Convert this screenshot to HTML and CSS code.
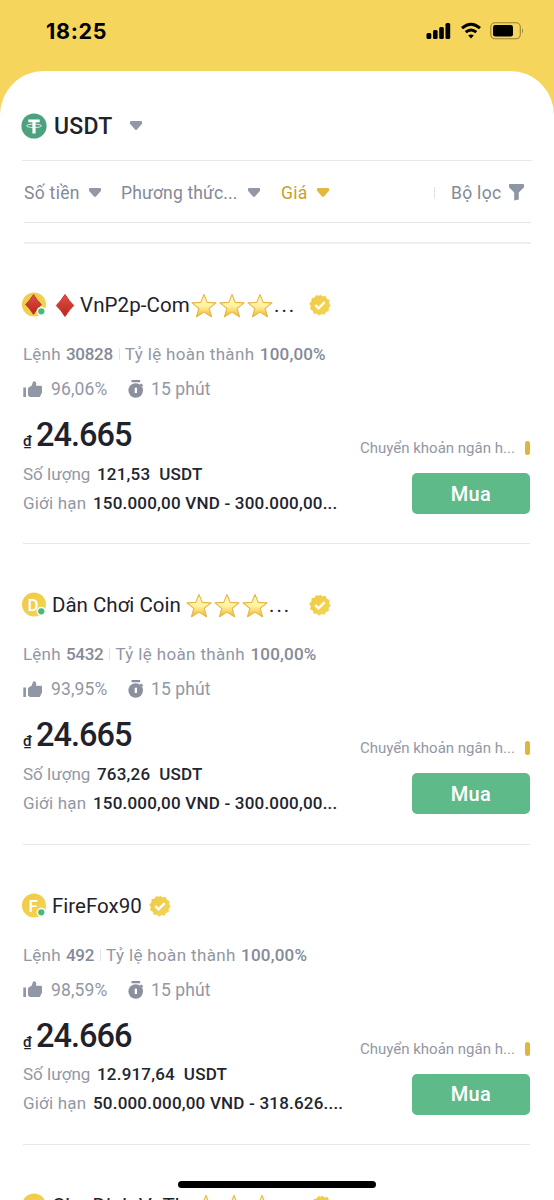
FILE: index.html
```html
<!DOCTYPE html>
<html lang="vi">
<head>
<meta charset="utf-8">
<title>P2P USDT</title>
<link rel="stylesheet" href="styles.css">
</head>
<body>
<svg class="defs" width="0" height="0" aria-hidden="true">
  <defs>
    <linearGradient id="gold" x1="0" y1="0" x2="1" y2="1"><stop offset="0" stop-color="#efc944"/><stop offset="1" stop-color="#f3d655"/></linearGradient>
    <linearGradient id="starfill" x1="0" y1="0" x2="0" y2="1"><stop offset="0" stop-color="#fff8bd"/><stop offset=".52" stop-color="#fff3a0"/><stop offset="1" stop-color="#f3b52d"/></linearGradient>
    <linearGradient id="ruby" x1="0" y1="0" x2="0" y2="1"><stop offset="0" stop-color="#df5147"/><stop offset="1" stop-color="#b9251b"/></linearGradient>
    <symbol id="star" viewBox="0 0 26 24"><path d="M13 1 16.2 8.9 25 9.4 18.2 14.9 20.5 23.2 13 18.6 5.500 23.200 7.800 14.900 1 9.400 9.800 8.900Z" fill="url(#starfill)" stroke="#e5b549" stroke-width="1.100" stroke-linejoin="round"/></symbol>
    <symbol id="diamond" viewBox="0 0 20 24"><path d="M10 1Q14 7.500 18.700 12 14 16.500 10 23 6 16.500 1.300 12 6 7.500 10 1Z" fill="url(#ruby)" stroke="#c83229" stroke-width="1"/></symbol>
    <symbol id="verified" viewBox="0 0 22 22"><path d="M11 .5 13.500 2.400 16.500 1.800 17.700 4.700 20.600 5.900 20.100 9 21.700 11.500 19.700 13.900 19.900 17 17 18 15.500 20.700 12.500 20.100 10 21.700 7.800 19.700 4.600 19.700 3.800 16.700 1.100 15.200 1.800 12.200.3 9.600 2.400 7.400 2.600 4.200 5.600 3.600 7.400 1.100 10 2Z" fill="url(#gold)"/><path d="m6.300 11.200 3.200 3.100 6.200-6.200" fill="none" stroke="#fff" stroke-width="2.300"/></symbol>
    <symbol id="thumb" viewBox="0 0 20 17"><path d="M.3 6.500H3V16H.3ZM5 7 8.800 4.500 10 .8Q10.300 0 11.300.2 13.500.7 13.300 3L12.900 4.700H18Q19 4.700 19 5.700V11.500L16.800 16H7L5 14.500Z" fill="#9197a5"/></symbol>
    <symbol id="timer" viewBox="0 0 16 18"><path d="M3.500 0H12.200V2.200H3.500ZM11.800 4.500 13.200 3.500 15.200 5.200 14.200 6.800Z" fill="#8a909e"/><circle cx="7.700" cy="10.500" r="7.300" fill="#8a909e"/><path d="M6.700 7.700H9V13H6.700Z" fill="#fff"/></symbol>
    <symbol id="caret" viewBox="0 0 12 9"><path d="M.8 0H11.200Q12 0 12 .8V2.800L7 8.600Q6 9.400 5 8.600L0 2.800V.8Q0 0 .8 0Z" fill="currentColor"/></symbol>
  </defs>
</svg>
<div class="screen">
  <header class="status">
    <span class="clock">18:25</span>
    <div class="signals">
      <svg width="26" height="18" viewBox="0 0 26 18"><rect x=".5" y="11" width="4.800" height="6" rx="1.500"/><rect x="7" y="8" width="4.600" height="9" rx="1.500"/><rect x="13.200" y="5" width="4.600" height="12" rx="1.500"/><rect x="19.500" y="1" width="4.700" height="16" rx="1.500"/></svg>
      <svg class="wifi" width="20" height="18" viewBox="0 0 20 18" fill="none" stroke="#000" stroke-width="3"><path d="M1 6.200Q10-1.700 19 6.200"/><path d="M4.700 10.200Q10 5.800 15.300 10.200"/><path d="M7.200 13.500Q10 11.600 12.800 13.500L10 16.500Z" fill="#000" stroke="none"/></svg>
      <svg class="battery" width="34" height="18" viewBox="0 0 34 18"><rect x=".8" y=".8" width="29.500" height="16" rx="4.200" fill="none" stroke="#988437" stroke-width="1.100"/><rect x="3" y="3" width="20" height="11.500" rx="2.300"/><path d="M32 6.200Q34 8.800 32 11.400Z" fill="#988437"/></svg>
    </div>
  </header>
  <main class="sheet">
    <div class="coin">
      <svg class="tether" width="26" height="26" viewBox="0 0 26 26"><circle cx="13" cy="13" r="12.600" fill="#4ca27f"/><path d="M7.300 6.500H18.700V9.300H14.600V20.500H11.400V9.300H7.300Z" fill="#fff"/><ellipse cx="13" cy="12.800" rx="7.500" ry="1.700" fill="none" stroke="#fff" stroke-width=".8"/></svg>
      <span class="coin-name">USDT</span>
      <svg class="caret" width="12" height="9"><use href="#caret"/></svg>
    </div>
    <nav class="filters">
      <span class="amount">Số tiền</span><svg class="caret" width="12" height="9"><use href="#caret"/></svg>
      <span class="method">Phương thức...</span><svg class="caret" width="12" height="9"><use href="#caret"/></svg>
      <span class="by-price">Giá</span><svg class="caret gold" width="12" height="9"><use href="#caret"/></svg>
      <i class="bar"></i><span class="more">Bộ lọc</span>
      <svg class="funnel" width="15" height="17" viewBox="0 0 15 17"><path d="M0 1Q0 0 1 0H14Q15 0 15 1V3.300L9.800 8.500V15.500L5.200 16.500V8.500L0 3.300Z" fill="#8e95a3"/></svg>
    </nav>
    <div class="gap"></div>

    <article class="card">
      <div class="name-row">
        <svg class="avatar" width="26" height="26" viewBox="0 0 26 26"><circle cx="12" cy="12.500" r="12" fill="url(#gold)"/><use href="#diamond" x="2.500" y="1.500" width="18" height="22"/><circle cx="19.300" cy="19.300" r="3.900" fill="#44bb7a" stroke="#fff" stroke-width="1.500"/></svg>
        <svg class="gem" width="20" height="25"><use href="#diamond"/></svg>
        <span class="name n1">VnP2p-Com</span>
        <span class="stars"><svg><use href="#star"/></svg><svg><use href="#star"/></svg><svg><use href="#star"/></svg></span><span class="dots">...</span>
        <svg class="badge" width="22" height="22"><use href="#verified"/></svg>
      </div>
      <div class="stats"><span class="st-a">Lệnh</span><b>30828</b><i class="bar"></i><span class="st-b">Tỷ lệ hoàn thành</span><b class="done">100,00%</b></div>
      <div class="rating"><svg width="20" height="17"><use href="#thumb"/></svg><span class="pct">96,06%</span><svg class="timer" width="16" height="18"><use href="#timer"/></svg><span class="mins">15 phút</span></div>
      <div class="offer">
        <div class="terms">
          <div class="price"><small>₫</small><strong>24.665</strong></div>
          <div class="line"><span class="qty">Số lượng</span><b>121,53&nbsp; USDT</b></div>
          <div class="line"><span class="lim">Giới hạn</span><b class="range">150.000,00 VND - 300.000,00...</b></div>
        </div>
        <div class="buy"><div class="pay"><span>Chuyển khoản ngân h...</span><i></i></div><button>Mua</button></div>
      </div>
    </article>

    <article class="card">
      <div class="name-row">
        <svg class="avatar" width="26" height="26" viewBox="0 0 26 26"><circle cx="12" cy="12.500" r="12" fill="url(#gold)"/><text class="initial" x="5.500" y="18.700">D</text><circle cx="19.300" cy="19.300" r="3.900" fill="#44bb7a" stroke="#fff" stroke-width="1.500"/></svg>
        <span class="name n2">Dân Chơi Coin</span>
        <span class="stars"><svg><use href="#star"/></svg><svg><use href="#star"/></svg><svg><use href="#star"/></svg></span><span class="dots wide">...</span>
        <svg class="badge" width="22" height="22"><use href="#verified"/></svg>
      </div>
      <div class="stats"><span class="st-a">Lệnh</span><b>5432</b><i class="bar"></i><span class="st-b">Tỷ lệ hoàn thành</span><b class="done">100,00%</b></div>
      <div class="rating"><svg width="20" height="17"><use href="#thumb"/></svg><span class="pct">93,95%</span><svg class="timer" width="16" height="18"><use href="#timer"/></svg><span class="mins">15 phút</span></div>
      <div class="offer">
        <div class="terms">
          <div class="price"><small>₫</small><strong>24.665</strong></div>
          <div class="line"><span class="qty">Số lượng</span><b>763,26&nbsp; USDT</b></div>
          <div class="line"><span class="lim">Giới hạn</span><b class="range">150.000,00 VND - 300.000,00...</b></div>
        </div>
        <div class="buy"><div class="pay"><span>Chuyển khoản ngân h...</span><i></i></div><button>Mua</button></div>
      </div>
    </article>

    <article class="card">
      <div class="name-row">
        <svg class="avatar" width="26" height="26" viewBox="0 0 26 26"><circle cx="12" cy="12.500" r="12" fill="url(#gold)"/><text class="initial" x="6.500" y="18.700">F</text><circle cx="19.300" cy="19.300" r="3.900" fill="#44bb7a" stroke="#fff" stroke-width="1.500"/></svg>
        <span class="name n3">FireFox90</span>
        <svg class="badge near" width="22" height="22"><use href="#verified"/></svg>
      </div>
      <div class="stats"><span class="st-a">Lệnh</span><b>492</b><i class="bar"></i><span class="st-b">Tỷ lệ hoàn thành</span><b class="done">100,00%</b></div>
      <div class="rating"><svg width="20" height="17"><use href="#thumb"/></svg><span class="pct">98,59%</span><svg class="timer" width="16" height="18"><use href="#timer"/></svg><span class="mins">15 phút</span></div>
      <div class="offer">
        <div class="terms">
          <div class="price"><small>₫</small><strong>24.666</strong></div>
          <div class="line"><span class="qty">Số lượng</span><b>12.917,64&nbsp; USDT</b></div>
          <div class="line"><span class="lim">Giới hạn</span><b class="range">50.000.000,00 VND - 318.626....</b></div>
        </div>
        <div class="buy"><div class="pay"><span>Chuyển khoản ngân h...</span><i></i></div><button>Mua</button></div>
      </div>
    </article>

    <article class="card">
      <div class="name-row">
        <svg class="avatar" width="26" height="26" viewBox="0 0 26 26"><circle cx="12" cy="12.500" r="12" fill="url(#gold)"/></svg>
        <span class="name n4">Che Dinh VaTh</span>
        <span class="stars"><svg><use href="#star"/></svg><svg><use href="#star"/></svg><svg><use href="#star"/></svg></span><span class="dots">...</span>
        <svg class="badge" width="22" height="22"><use href="#verified"/></svg>
      </div>
    </article>
  </main>
  <div class="home"></div>
</div>
</body>
</html>
```
FILE: styles.css
```css
* { box-sizing: border-box; }
body { margin: 0; background: #f5d55b; font-family: Roboto, "Noto Sans", sans-serif; color: #1f222b; }
svg { display: block; flex: none; }
.defs { position: absolute; }
.screen { position: relative; width: 554px; height: 1200px; overflow: hidden; background: #f5d55b; }
.status { height: 71px; padding: 0 30px 10px 46px; display: flex; align-items: center; justify-content: space-between; }
.clock { font: 700 21.5px Inter, sans-serif; color: #000; letter-spacing: .7px; }
.signals { display: flex; align-items: center; }
.wifi { margin-left: 9px; }
.battery { margin-left: 9px; }
.sheet { height: 1129px; background: #fff; border-radius: 44px 44px 0 0; padding: 0 22px; overflow: hidden; }
.coin { height: 90px; padding-top: 21px; display: flex; align-items: center; border-bottom: 1px solid #e6e8ec; }
.tether { margin: -1px 1px 0 -1px; }
.coin-name { width: 76px; margin-left: 6px; padding-top: 1px; font-size: 23px; font-weight: 500; letter-spacing: .3px; }
.caret { color: #9299a6; margin-top: -1px; }
.caret.gold { color: #e4b83f; }
.filters { height: 62px; margin: 0 1px 0 2px; padding-top: 2px; border-bottom: 1px solid #e6e8ec; display: flex; align-items: center; font-size: 17.5px; color: #838997; letter-spacing: .3px; }
.filters span { white-space: nowrap; }
.filters .method { letter-spacing: .15px; }
.amount { width: 65px; }
.method { width: 127px; margin-left: 20px; }
.by-price { width: 36px; margin-left: 21px; color: #c9a02f; }
.bar { width: 1px; height: 12px; background: #e1e3e8; }
.filters .bar { margin-left: 105px; }
.more { width: 58px; margin-left: 16px; }
.gap { height: 21px; margin: 0 1px 0 2px; border-bottom: 2px solid #edeef2; }
.card { height: 300.4px; margin: 0 2px 0 1px; padding-top: 41px; border-bottom: 1px solid #e6e8ec; }
.name-row { height: 40px; margin-left: -1px; display: flex; align-items: center; }
.name { font-size: 20.5px; white-space: nowrap; }
.avatar { margin-right: 4px; }
.gem { margin: 0 0 0 3px; }
.gem + .name { margin-left: 5px; }
.n1 { width: 111px; letter-spacing: .1px; }
.n2 { width: 134px; }
.n3 { width: 97px; }
.n4 { width: 141px; }
.stars { display: flex; gap: 2px; }
.stars svg { width: 26px; height: 25px; }
.dots { width: 35px; font-size: 20.5px; letter-spacing: 2px; margin-left: 1px; }
.dots.wide { width: 40px; }
.initial { font: 500 17px Roboto, sans-serif; fill: #fff; }
.stats { height: 24px; margin-top: 17px; display: flex; align-items: center; font-size: 17px; color: #9297a4; white-space: nowrap; }
.stats b { font-weight: 500; color: #858a98; letter-spacing: -.3px; }
.stats .done { letter-spacing: .2px; }
.stats .bar { margin: 0 5px 0 6px; }
.st-a { width: 43px; letter-spacing: .2px; }
.st-b { width: 135px; letter-spacing: .35px; }
.rating { height: 24px; margin-top: 11px; display: flex; align-items: center; font-size: 17.5px; color: #9297a4; white-space: nowrap; }
.pct { width: 77px; margin-left: 8px; letter-spacing: .15px; }
.mins { margin-left: 7px; letter-spacing: .1px; }
.offer { margin-top: 15px; display: flex; justify-content: space-between; }
.price { height: 36px; display: flex; align-items: baseline; line-height: 38px; white-space: nowrap; }
.price small { width: 13px; font-size: 15px; font-weight: 500; }
.price strong { font-size: 32.5px; font-weight: 500; letter-spacing: -1px; }
.line { height: 29px; display: flex; align-items: center; font-size: 17px; color: #9297a4; white-space: nowrap; }
.price + .line { margin-top: 7px; }
.line b { color: #22252e; font-weight: 500; letter-spacing: .2px; }
.qty { width: 74px; }
.lim { width: 70px; letter-spacing: .2px; }
.buy { width: 170px; padding-top: 20px; }
.pay { height: 24px; display: flex; align-items: center; justify-content: space-between; font-size: 15px; color: #9297a4; white-space: nowrap; }
.pay i { width: 5px; height: 14px; border-radius: 3px; background: #e1b43e; }
.buy button { display: block; width: 118px; height: 41px; margin: 13px 0 0 auto; padding: 0; border: 0; border-radius: 5px; background: #5fba89; color: #fff; font: 500 20px Roboto, sans-serif; letter-spacing: .4px; }
.home { position: absolute; left: 178px; top: 1181px; width: 198px; height: 7px; border-radius: 4px; background: #000; }
```
